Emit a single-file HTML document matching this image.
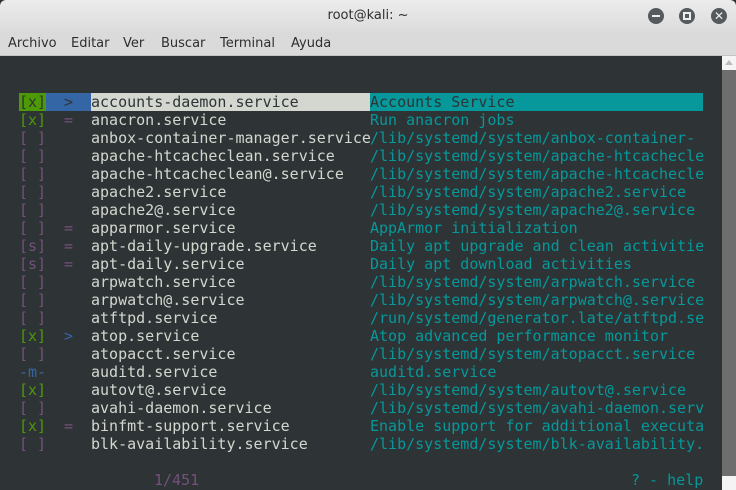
<!DOCTYPE html>
<html><head><meta charset="utf-8"><style>
*{margin:0;padding:0;box-sizing:border-box}
body{width:736px;height:490px;overflow:hidden;background:#2e3436;position:relative;font-family:"DejaVu Sans Mono","Liberation Mono",monospace}
#title{position:absolute;left:0;top:0;width:736px;height:32px;background:linear-gradient(#ececec,#dcdcdc);border-radius:6px 6px 0 0;font-family:"DejaVu Sans","Liberation Sans",sans-serif;font-size:13px;color:#2e2e2e;text-align:center;line-height:32px}
#menu{position:absolute;left:0;top:32px;width:736px;height:24px;background:#dadada;border-bottom:1px solid #c4c4c4;font-family:"DejaVu Sans","Liberation Sans",sans-serif;font-size:13px;color:#2e2e2e;line-height:24px}
#menu span{position:absolute;top:0}
.btn{position:absolute;top:8px;width:16px;height:16px;border-radius:50%;background:#555a5c}
#sb{position:absolute;left:722px;top:56px;width:14px;height:434px;background:#6e6e6e}
.row{position:absolute;left:19px;height:18px;line-height:18px;font-size:15px;white-space:pre;color:#d3d7cf}
.c{position:absolute;top:0;height:18px}
.g{color:#4e9a06}.p{color:#75507b}.b{color:#3465a4}.t{color:#06989a}
</style></head><body>
<div id="title">root@kali: ~</div>
<div class="btn" style="left:648px"><div style="position:absolute;left:4px;top:7px;width:8px;height:2px;background:#eee"></div></div>
<div class="btn" style="left:679px"><div style="position:absolute;left:4px;top:4px;width:8px;height:8px;border:2px solid #eee"></div></div>
<div class="btn" style="left:711px;color:#eee;font-size:12px;line-height:16px;text-align:center;font-family:'DejaVu Sans',sans-serif">✕</div>
<div id="menu"><span style="left:8px">Archivo</span><span style="left:71px">Editar</span><span style="left:123px">Ver</span><span style="left:161px">Buscar</span><span style="left:220px">Terminal</span><span style="left:291px">Ayuda</span></div>
<div id="sb"><div style="position:absolute;left:0;top:0;width:14px;height:14px;background:#f4f4f4"></div><div style="position:absolute;left:3px;top:4px;border:4px solid transparent;border-bottom:5px solid #bbb;border-top:0"></div><div style="position:absolute;left:0;bottom:0;width:14px;height:14px;background:#f4f4f4"></div></div>

<div class="row" style="top:93px;width:684px">
<div class="c" style="left:0;width:27px;background:#4e9a06;color:#2e3436">[x]</div>
<div class="c" style="left:27px;width:45px;background:#3465a4;color:#2e3436">  &gt;</div>
<div class="c" style="left:72px;width:279px;background:#d3d7cf;color:#2e3436">accounts-daemon.service</div>
<div class="c" style="left:351px;width:333px;background:#06989a;color:#2e3436">Accounts Service</div>
</div>

<div id="rows"></div>
<div class="row p" style="top:471px;left:154px">1/451</div>
<div class="row t" style="top:471px;left:631px">? - help</div>
<script>
var R=[
["g","[x]","p","=","anacron.service","Run anacron jobs"],
["p","[ ]","","","anbox-container-manager.service","/lib/systemd/system/anbox-container-"],
["p","[ ]","","","apache-htcacheclean.service","/lib/systemd/system/apache-htcachecle"],
["p","[ ]","","","apache-htcacheclean@.service","/lib/systemd/system/apache-htcachecle"],
["p","[ ]","","","apache2.service","/lib/systemd/system/apache2.service"],
["p","[ ]","","","apache2@.service","/lib/systemd/system/apache2@.service"],
["p","[ ]","p","=","apparmor.service","AppArmor initialization"],
["p","[s]","p","=","apt-daily-upgrade.service","Daily apt upgrade and clean activitie"],
["p","[s]","p","=","apt-daily.service","Daily apt download activities"],
["p","[ ]","","","arpwatch.service","/lib/systemd/system/arpwatch.service"],
["p","[ ]","","","arpwatch@.service","/lib/systemd/system/arpwatch@.service"],
["p","[ ]","","","atftpd.service","/run/systemd/generator.late/atftpd.se"],
["g","[x]","b",">","atop.service","Atop advanced performance monitor"],
["p","[ ]","","","atopacct.service","/lib/systemd/system/atopacct.service"],
["b","-m-","","","auditd.service","auditd.service"],
["g","[x]","","","autovt@.service","/lib/systemd/system/autovt@.service"],
["p","[ ]","","","avahi-daemon.service","/lib/systemd/system/avahi-daemon.serv"],
["g","[x]","p","=","binfmt-support.service","Enable support for additional executa"],
["p","[ ]","","","blk-availability.service","/lib/systemd/system/blk-availability."]];
var h="";R.forEach(function(r,i){var t=111+i*18;
h+='<div class="row" style="top:'+t+'px;width:684px"><div class="c '+r[0]+'" style="left:0">'+r[1]+'</div><div class="c '+r[2]+'" style="left:45px">'+r[3].replace(">","&gt;")+'</div><div class="c" style="left:72px">'+r[4]+'</div><div class="c t" style="left:351px">'+r[5]+'</div></div>';});
document.getElementById("rows").innerHTML=h;
</script>
</body></html>
